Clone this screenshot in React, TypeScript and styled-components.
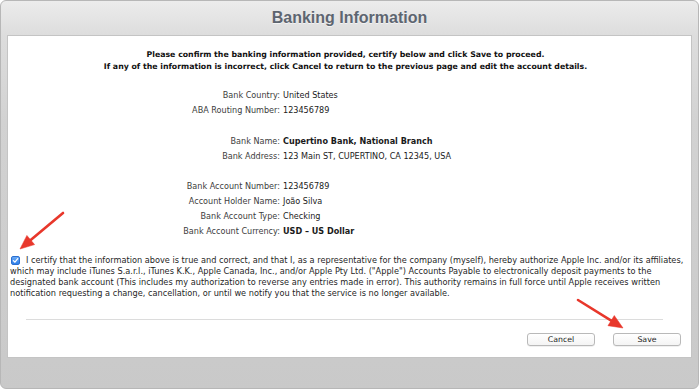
import styled, { createGlobalStyle } from "styled-components"

const GlobalStyle = createGlobalStyle`
  html, body {
    margin: 0;
    padding: 0;
    background: #ffffff;
  }
  body {
    font-family: "DejaVu Sans", Verdana, sans-serif;
  }
`

// Layout
const Page = styled.div`
  position: relative;
  width: 700px;
  height: 390px;
  overflow: hidden;
`

const Window = styled.div`
  box-sizing: border-box;
  width: 699px;
  height: 389px;
  border: 1px solid #b7b7b7;
  border-radius: 6px;
  background: linear-gradient(#ececec 0px, #dddddd 34px, #d2d2d2 120px, #c9c9c9 389px);
  display: flex;
  flex-direction: column;
`

const TitleBar = styled.div`
  height: 34px;
  display: flex;
  align-items: center;
  justify-content: center;
`

const Title = styled.h1`
  margin: 0;
  font-family: "Liberation Sans", Arial, sans-serif;
  font-size: 16px;
  font-weight: bold;
  color: #5d6570;
  text-shadow: 0 1px 0 rgba(255, 255, 255, 0.6);
`

const Panel = styled.div`
  box-sizing: border-box;
  margin: 0 6px;
  height: 323px;
  background: #ffffff;
  border: 1px solid #c4c4c4;
  padding: 13px 10px 0 2px;
  display: flex;
  flex-direction: column;
`

const Intro = styled.p`
  margin: 0;
  text-align: center;
  font-size: 7.8px;
  line-height: 11.5px;
  font-weight: bold;
  color: #111;
`

const FieldGroup = styled.div<{ $gap: number }>`
  display: grid;
  grid-template-columns: 270px auto;
  column-gap: 3px;
  grid-auto-rows: 15px;
  align-items: center;
  margin-top: ${props => props.$gap}px;
  font-size: 8.1px;
`

const Label = styled.span`
  text-align: right;
  color: #3d3d3d;
`

const Value = styled.span<{ $bold?: boolean }>`
  color: #1a1a1a;
  font-weight: ${props => props.$bold ? 'bold' : 'normal'};
`

const Certify = styled.div`
  margin-top: 17px;
  font-size: 8.2px;
  line-height: 11px;
  color: #1f1f1f;
  white-space: nowrap;
`

const CheckBox = styled.span`
  display: inline-flex;
  align-items: center;
  justify-content: center;
  width: 9px;
  height: 9px;
  margin: 0 6px 0 1px;
  vertical-align: -1px;
  border-radius: 2px;
  background: linear-gradient(#6aaaf5, #2f7fe8);
  border: 1px solid #2b6fd0;
  box-sizing: border-box;
`

const Separator = styled.hr`
  margin: 20px 18px 0 16px;
  border: 0;
  border-top: 1px solid #dcdcdc;
`

const ButtonRow = styled.div`
  display: flex;
  justify-content: flex-end;
  gap: 18px;
  margin-top: 13px;
`

const Button = styled.button`
  box-sizing: border-box;
  width: 68px;
  height: 13px;
  padding: 0;
  border: 1px solid #b9b9b9;
  border-radius: 3px;
  background: linear-gradient(#ffffff, #f4f4f4);
  box-shadow: 0 0.5px 0 rgba(0, 0, 0, 0.12);
  font-family: "DejaVu Sans", Verdana, sans-serif;
  font-size: 7.8px;
  line-height: 11px;
  color: #222;
`

const Annotations = styled.svg`
  position: absolute;
  left: 0;
  top: 0;
  pointer-events: none;
`

const Check = () => (
  <svg width="7" height="7" viewBox="0 0 10 10">
    <path d="M2 5.2 L4.2 7.4 L8.2 2.4" fill="none" stroke="#fff" strokeWidth="1.8" strokeLinecap="round" strokeLinejoin="round" />
  </svg>
)

const Arrow = ({ x1, y1, x2, y2 }: { x1: number, y1: number, x2: number, y2: number }) => {
  const angle = Math.atan2(y2 - y1, x2 - x1)
  const len = 14
  const half = 6
  const bx = x2 - Math.cos(angle) * len
  const by = y2 - Math.sin(angle) * len
  const px = -Math.sin(angle) * half
  const py = Math.cos(angle) * half
  return (
    <g fill="#e8372b" stroke="#e8372b">
      <line x1={x1} y1={y1} x2={bx + Math.cos(angle) * 2} y2={by + Math.sin(angle) * 2} strokeWidth="2.6" strokeLinecap="round" />
      <polygon points={`${x2},${y2} ${bx + px},${by + py} ${bx - px},${by - py}`} strokeWidth="0.5" />
    </g>
  )
}

const App = () => {
  return (
    <>
      <GlobalStyle />
      <Page>
        <Window>
          <TitleBar>
            <Title>Banking Information</Title>
          </TitleBar>
          <Panel>
            <Intro>
              Please confirm the banking information provided, certify below and click Save to proceed.<br />
              If any of the information is incorrect, click Cancel to return to the previous page and edit the account details.
            </Intro>

            <FieldGroup $gap={15}>
              <Label>Bank Country:</Label><Value>United States</Value>
              <Label>ABA Routing Number:</Label><Value>123456789</Value>
            </FieldGroup>

            <FieldGroup $gap={16}>
              <Label>Bank Name:</Label><Value $bold>Cupertino Bank, National Branch</Value>
              <Label>Bank Address:</Label><Value>123 Main ST, CUPERTINO, CA 12345, USA</Value>
            </FieldGroup>

            <FieldGroup $gap={15}>
              <Label>Bank Account Number:</Label><Value>123456789</Value>
              <Label>Account Holder Name:</Label><Value>João Silva</Value>
              <Label>Bank Account Type:</Label><Value>Checking</Value>
              <Label>Bank Account Currency:</Label><Value $bold>USD – US Dollar</Value>
            </FieldGroup>

            <Certify>
              <CheckBox><Check /></CheckBox>I certify that the information above is true and correct, and that I, as a representative for the company (myself), hereby authorize Apple Inc. and/or its affiliates,<br />
              which may include iTunes S.a.r.l., iTunes K.K., Apple Canada, Inc., and/or Apple Pty Ltd. ("Apple") Accounts Payable to electronically deposit payments to the<br />
              designated bank account (This includes my authorization to reverse any entries made in error). This authority remains in full force until Apple receives written<br />
              notification requesting a change, cancellation, or until we notify you that the service is no longer available.
            </Certify>

            <Separator />

            <ButtonRow>
              <Button>Cancel</Button>
              <Button>Save</Button>
            </ButtonRow>
          </Panel>
        </Window>
        <Annotations width="700" height="390">
          <Arrow x1={63} y1={213} x2={20} y2={249} />
          <Arrow x1={578} y1={300} x2={623} y2={328} />
        </Annotations>
      </Page>
    </>
  )
}

export default App
